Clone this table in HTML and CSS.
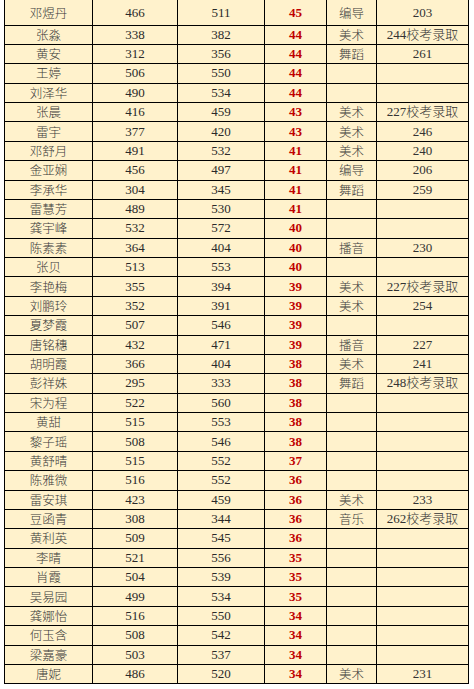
FILE: index.html
```html
<!DOCTYPE html>
<html lang="zh-CN">
<head>
<meta charset="utf-8">
<title>成绩表</title>
<link rel="stylesheet" href="styles.css">
</head>
<body>
<table class="scores">
<colgroup>
<col class="c1"><col class="c2"><col class="c3"><col class="c4"><col class="c5"><col class="c6">
</colgroup>
<tbody>
<tr class="first"><td class="name">邓煜丹</td><td>466</td><td>511</td><td class="diff">45</td><td class="cat">编导</td><td class="note">203</td></tr>
<tr><td class="name">张淼</td><td>338</td><td>382</td><td class="diff">44</td><td class="cat">美术</td><td class="note">244校考录取</td></tr>
<tr><td class="name">黄安</td><td>312</td><td>356</td><td class="diff">44</td><td class="cat">舞蹈</td><td class="note">261</td></tr>
<tr><td class="name">王婷</td><td>506</td><td>550</td><td class="diff">44</td><td class="cat"></td><td class="note"></td></tr>
<tr><td class="name">刘泽华</td><td>490</td><td>534</td><td class="diff">44</td><td class="cat"></td><td class="note"></td></tr>
<tr><td class="name">张晨</td><td>416</td><td>459</td><td class="diff">43</td><td class="cat">美术</td><td class="note">227校考录取</td></tr>
<tr><td class="name">雷宇</td><td>377</td><td>420</td><td class="diff">43</td><td class="cat">美术</td><td class="note">246</td></tr>
<tr><td class="name">邓舒月</td><td>491</td><td>532</td><td class="diff">41</td><td class="cat">美术</td><td class="note">240</td></tr>
<tr><td class="name">金亚娴</td><td>456</td><td>497</td><td class="diff">41</td><td class="cat">编导</td><td class="note">206</td></tr>
<tr><td class="name">李承华</td><td>304</td><td>345</td><td class="diff">41</td><td class="cat">舞蹈</td><td class="note">259</td></tr>
<tr><td class="name">雷慧芳</td><td>489</td><td>530</td><td class="diff">41</td><td class="cat"></td><td class="note"></td></tr>
<tr><td class="name">龚宇峰</td><td>532</td><td>572</td><td class="diff">40</td><td class="cat"></td><td class="note"></td></tr>
<tr><td class="name">陈素素</td><td>364</td><td>404</td><td class="diff">40</td><td class="cat">播音</td><td class="note">230</td></tr>
<tr><td class="name">张贝</td><td>513</td><td>553</td><td class="diff">40</td><td class="cat"></td><td class="note"></td></tr>
<tr><td class="name">李艳梅</td><td>355</td><td>394</td><td class="diff">39</td><td class="cat">美术</td><td class="note">227校考录取</td></tr>
<tr><td class="name">刘鹏玲</td><td>352</td><td>391</td><td class="diff">39</td><td class="cat">美术</td><td class="note">254</td></tr>
<tr><td class="name">夏梦霞</td><td>507</td><td>546</td><td class="diff">39</td><td class="cat"></td><td class="note"></td></tr>
<tr><td class="name">唐铭穗</td><td>432</td><td>471</td><td class="diff">39</td><td class="cat">播音</td><td class="note">227</td></tr>
<tr><td class="name">胡明霞</td><td>366</td><td>404</td><td class="diff">38</td><td class="cat">美术</td><td class="note">241</td></tr>
<tr><td class="name">彭祥姝</td><td>295</td><td>333</td><td class="diff">38</td><td class="cat">舞蹈</td><td class="note">248校考录取</td></tr>
<tr><td class="name">宋为程</td><td>522</td><td>560</td><td class="diff">38</td><td class="cat"></td><td class="note"></td></tr>
<tr><td class="name">黄甜</td><td>515</td><td>553</td><td class="diff">38</td><td class="cat"></td><td class="note"></td></tr>
<tr><td class="name">黎子瑶</td><td>508</td><td>546</td><td class="diff">38</td><td class="cat"></td><td class="note"></td></tr>
<tr><td class="name">黄舒晴</td><td>515</td><td>552</td><td class="diff">37</td><td class="cat"></td><td class="note"></td></tr>
<tr><td class="name">陈雅微</td><td>516</td><td>552</td><td class="diff">36</td><td class="cat"></td><td class="note"></td></tr>
<tr><td class="name">雷安琪</td><td>423</td><td>459</td><td class="diff">36</td><td class="cat">美术</td><td class="note">233</td></tr>
<tr><td class="name">豆函青</td><td>308</td><td>344</td><td class="diff">36</td><td class="cat">音乐</td><td class="note">262校考录取</td></tr>
<tr><td class="name">黄利英</td><td>509</td><td>545</td><td class="diff">36</td><td class="cat"></td><td class="note"></td></tr>
<tr><td class="name">李晴</td><td>521</td><td>556</td><td class="diff">35</td><td class="cat"></td><td class="note"></td></tr>
<tr><td class="name">肖霞</td><td>504</td><td>539</td><td class="diff">35</td><td class="cat"></td><td class="note"></td></tr>
<tr><td class="name">吴易园</td><td>499</td><td>534</td><td class="diff">35</td><td class="cat"></td><td class="note"></td></tr>
<tr><td class="name">龚娜怡</td><td>516</td><td>550</td><td class="diff">34</td><td class="cat"></td><td class="note"></td></tr>
<tr><td class="name">何玉含</td><td>508</td><td>542</td><td class="diff">34</td><td class="cat"></td><td class="note"></td></tr>
<tr><td class="name">梁嘉豪</td><td>503</td><td>537</td><td class="diff">34</td><td class="cat"></td><td class="note"></td></tr>
<tr><td class="name">唐妮</td><td>486</td><td>520</td><td class="diff">34</td><td class="cat">美术</td><td class="note">231</td></tr>
</tbody>
</table>
</body>
</html>
```

FILE: styles.css
```css
html, body {
  margin: 0;
  padding: 0;
  background: #ffffff;
}

.scores {
  margin: 0 0 0 4px;
  border-collapse: collapse;
  table-layout: fixed;
  width: 464px;
  background: #fff2cc;
  font-family: "Liberation Serif", "Noto Sans CJK SC", serif;
  font-size: 13px;
  color: #2a2a2a;
}

.c1 { width: 88px; }
.c2 { width: 85px; }
.c3 { width: 87px; }
.c4 { width: 62px; }
.c5 { width: 50px; }
.c6 { width: 92px; }

.scores td {
  border: 1px solid #000;
  height: 19.38px;
  padding: 0;
  text-align: center;
  vertical-align: middle;
  line-height: 16px;
  white-space: nowrap;
  box-sizing: border-box;
}

.scores tr.first td {
  border-top: none;
  height: 25px;
  padding-top: 2px;
}

.scores td.name,
.scores td.cat {
  color: #3a3a3a;
  font-family: "Noto Sans CJK SC", "Liberation Serif", sans-serif;
  font-weight: 300;
  font-size: 12.5px;
}

.scores td.note {
  font-family: "Liberation Serif", "Noto Sans CJK SC", serif;
  font-weight: 300;
  color: #333333;
}

.scores td.diff {
  color: #c00000;
  font-weight: bold;
}
```
